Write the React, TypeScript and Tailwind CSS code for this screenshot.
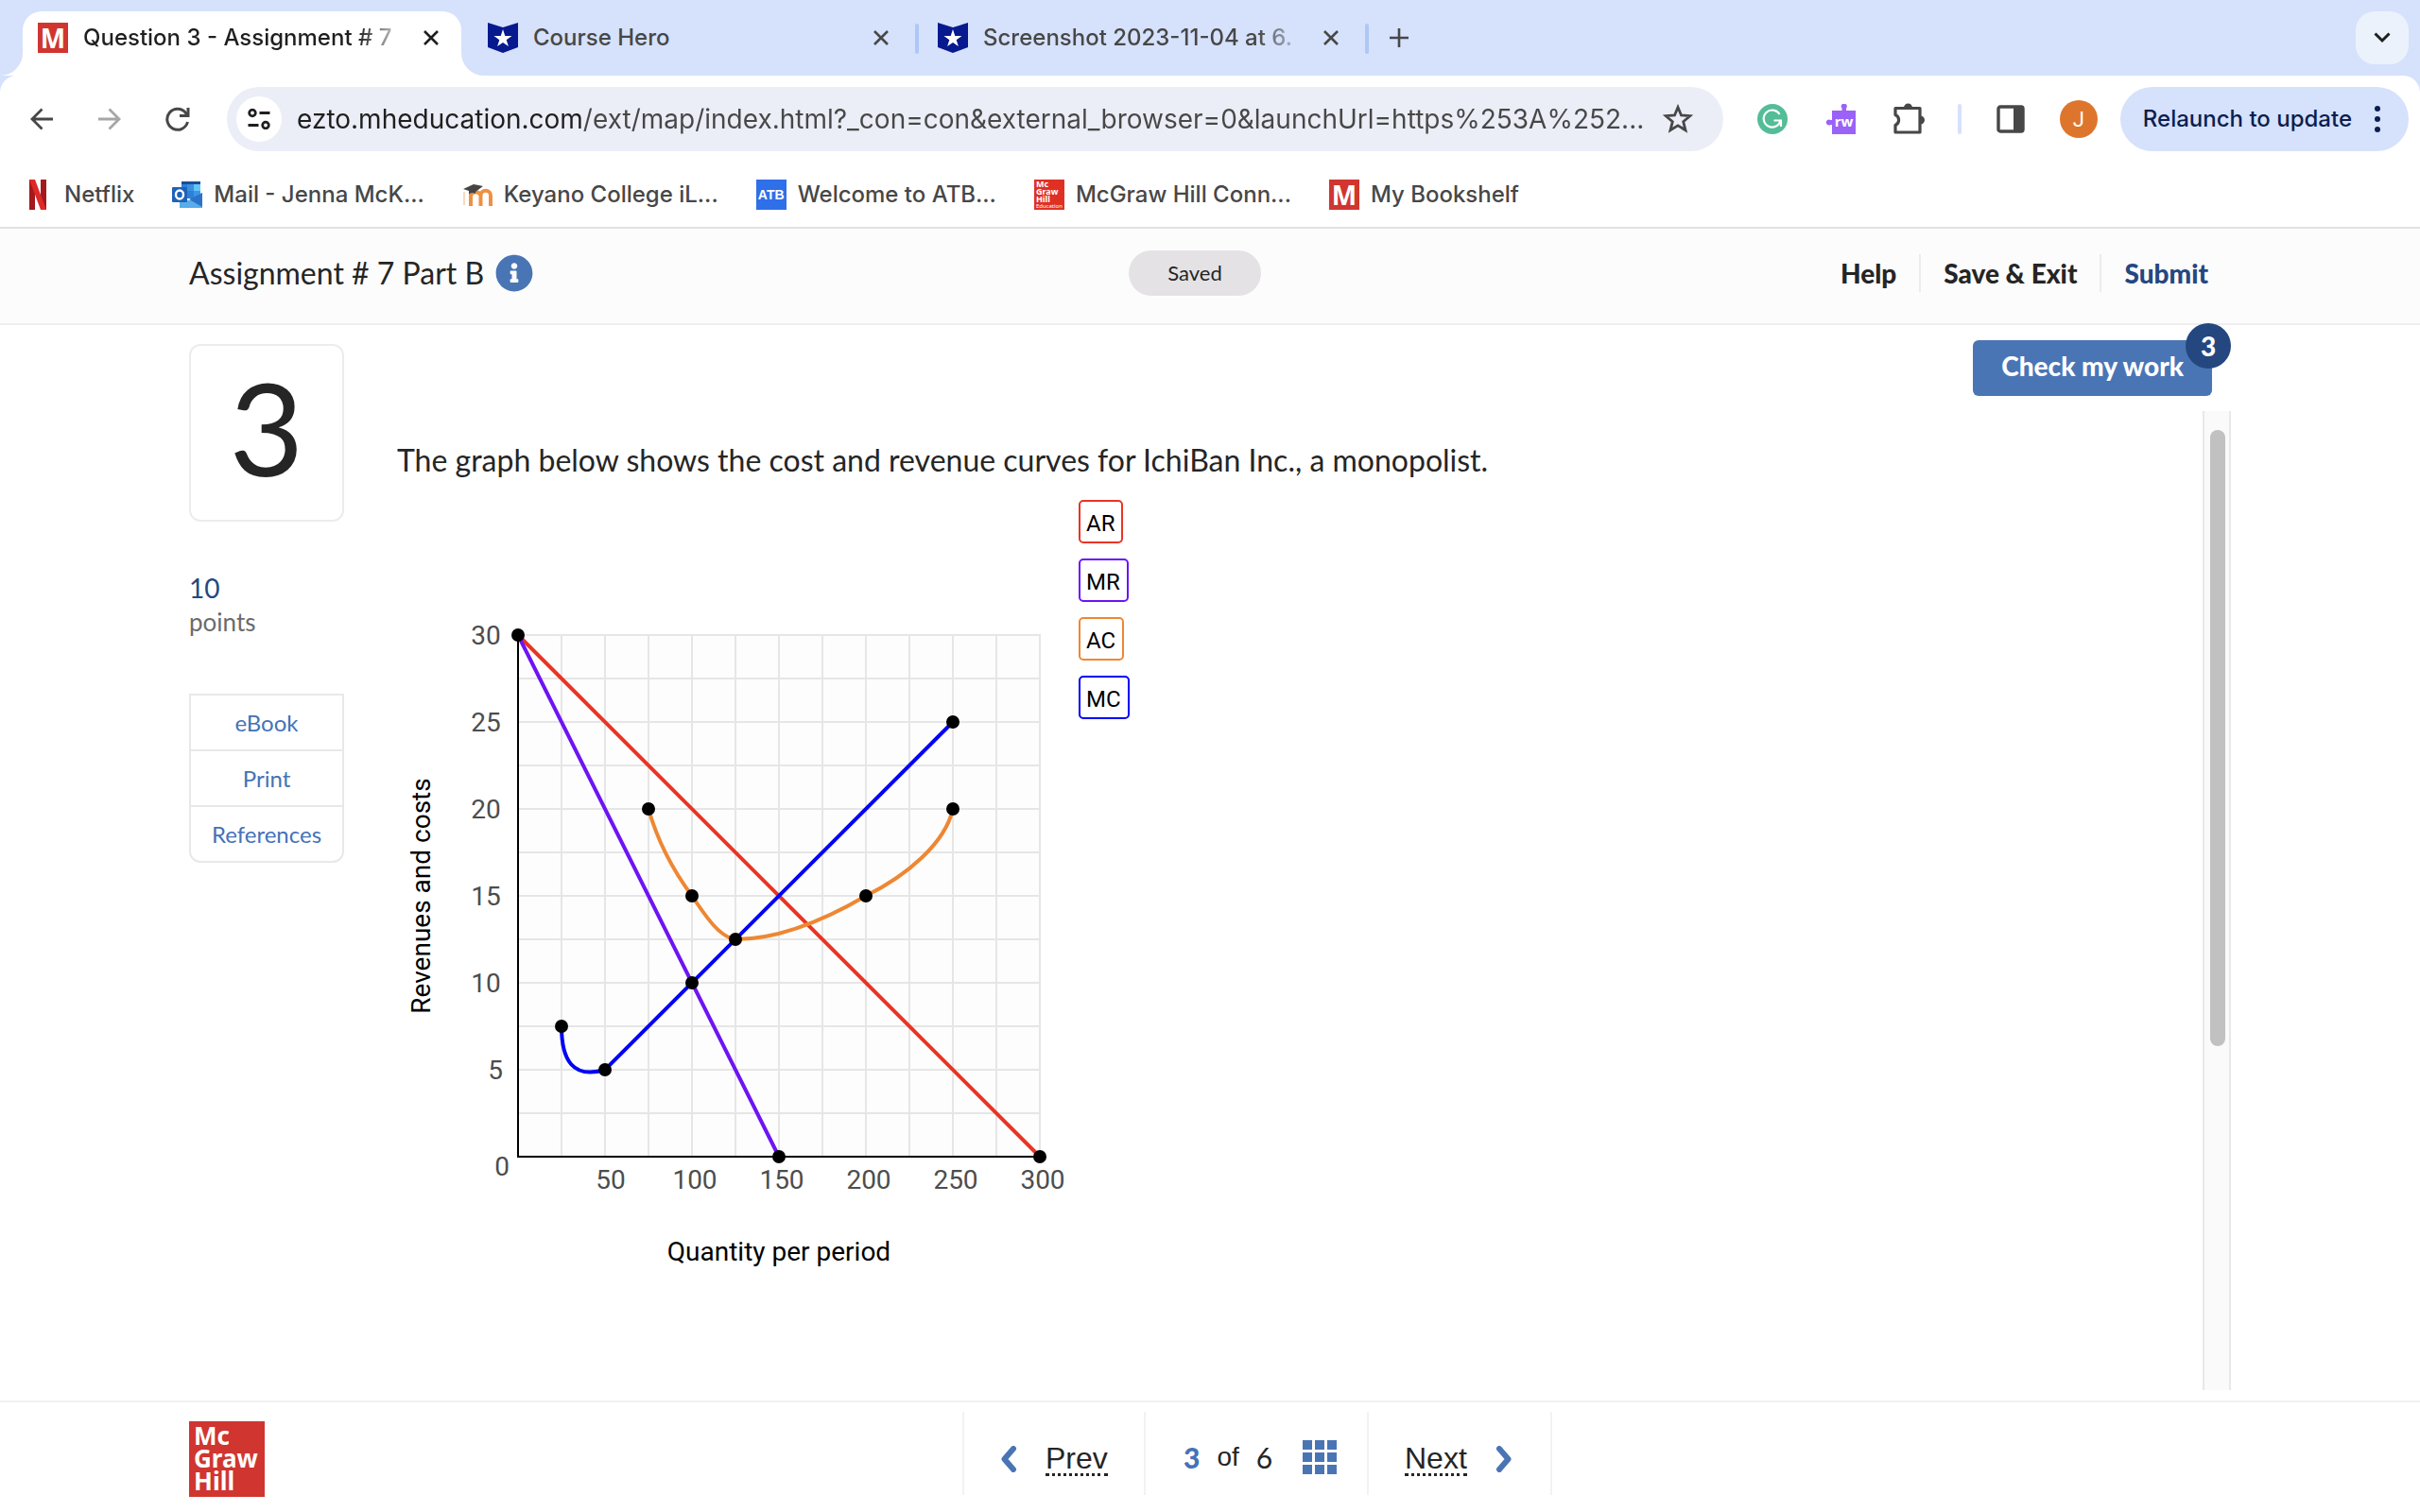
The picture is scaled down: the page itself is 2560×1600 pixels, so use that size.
import type { ReactNode } from 'react';
import { FaInfoCircle } from 'react-icons/fa';

function RedM() {
  return (
    <span className="flex size-8 shrink-0 items-center justify-center bg-[#d03530] font-['Open_Sans'] text-[28px] leading-8 font-bold text-white">
      M
    </span>
  );
}

function HeroIcon() {
  return (
    <svg viewBox="0 0 32 32" className="size-8 shrink-0">
      <path d="M0 0 L16 5 L32 0 V26 L16 32 L0 26 Z" fill="#06198f" />
      <path
        d="M16 7 L18.3 14 H25.5 L19.7 18.2 L21.9 25 L16 20.9 L10.1 25 L12.3 18.2 L6.5 14 H13.7 Z"
        fill="#fff"
      />
    </svg>
  );
}

function CloseIcon() {
  return (
    <svg viewBox="0 0 16 16" className="size-4" fill="none" stroke="currentColor" strokeWidth="2.6">
      <path d="M1 1 L15 15 M15 1 L1 15" />
    </svg>
  );
}

function Tab({ icon, title, active, fade }: { icon: ReactNode; title: string; active?: boolean; fade?: boolean }) {
  return (
    <div
      className={
        active
          ? 'relative mt-3 flex h-[68px] w-[464px] items-start rounded-t-[20px] bg-white px-4 text-[#1f1f1f]'
          : 'relative mt-3 flex h-[68px] w-[480px] items-start pr-6 pl-6 text-[#474747]'
      }
    >
      {active && (
        <>
          <svg viewBox="0 0 24 24" className="absolute bottom-0 -left-6 size-6">
            <path d="M24 0 V24 H0 A24 24 0 0 0 24 0 Z" fill="#fff" />
          </svg>
          <svg viewBox="0 0 24 24" className="absolute -right-6 bottom-0 size-6">
            <path d="M0 0 V24 H24 A24 24 0 0 1 0 0 Z" fill="#fff" />
          </svg>
        </>
      )}
      <div className="flex h-14 w-full items-center gap-4">
        {icon}
        <a
          href="#tab"
          className={
            fade
              ? 'flex-1 truncate [mask-image:linear-gradient(to_right,black_290px,transparent_345px)]'
              : 'flex-1 truncate'
          }
        >
          {title}
        </a>
        <button aria-label={`Close ${title}`} className="flex size-8 items-center justify-center">
          <CloseIcon />
        </button>
      </div>
      {!active && <span className="absolute top-[13px] right-0 h-8 w-1 rounded bg-[#adc8f5]" />}
    </div>
  );
}

function TabStrip() {
  return (
    <div className="flex h-20 bg-[#d6e1fc] pr-3 pl-6 text-[24px] leading-8 font-medium">
      <Tab icon={<RedM />} title="Question 3 - Assignment # 7" active fade />
      <div className="pl-1">
        <Tab icon={<HeroIcon />} title="Course Hero" />
      </div>
      <div className="-ml-1">
        <Tab icon={<HeroIcon />} title="Screenshot 2023-11-04 at 6." fade />
      </div>
      <button aria-label="New tab" className="mt-3 flex h-14 w-16 items-center justify-center text-[#474747]">
        <svg viewBox="0 0 20 20" className="size-5" fill="none" stroke="currentColor" strokeWidth="2.6">
          <path d="M10 0 V20 M0 10 H20" />
        </svg>
      </button>
      <button
        aria-label="Search tabs"
        className="mt-3 ml-auto flex size-14 items-center justify-center rounded-[20px] bg-[#ebf2fc] text-[#1f1f1f]"
      >
        <svg viewBox="0 0 18 12" className="h-3 w-[18px]" fill="none" stroke="currentColor" strokeWidth="3">
          <path d="M1.5 1.5 L9 9 L16.5 1.5" />
        </svg>
      </button>
    </div>
  );
}

function ToolButton({ label, children }: { label: string; children: ReactNode }) {
  return (
    <button aria-label={label} className="flex h-[68px] w-[72px] shrink-0 items-center justify-center text-[#474747]">
      {children}
    </button>
  );
}

function Toolbar() {
  return (
    <div className="bg-[#d6e1fc]">
      <div className="flex h-[92px] items-center rounded-t-[18px] bg-white pr-3 pl-2">
        <ToolButton label="Back">
          <svg viewBox="0 0 24 24" className="size-6" fill="none" stroke="currentColor" strokeWidth="2.8">
            <path d="M24 12 H2 M12.5 1.5 L2 12 L12.5 22.5" />
          </svg>
        </ToolButton>
        <ToolButton label="Forward">
          <svg viewBox="0 0 24 24" className="size-6" fill="none" stroke="#a6a6a6" strokeWidth="2.8">
            <path d="M0 12 H22 M11.5 1.5 L22 12 L11.5 22.5" />
          </svg>
        </ToolButton>
        <ToolButton label="Reload">
          <svg viewBox="0 0 26 26" className="size-[26px]" fill="none" stroke="currentColor" strokeWidth="3">
            <path d="M23.5 16 A11 11 0 1 1 21.5 6.5 L23.5 9" />
            <path d="M24 1 V9.5 H15" />
          </svg>
        </ToolButton>
        <div className="mr-4 ml-4 flex h-[68px] flex-1 items-center rounded-full bg-[#ebeef7] pr-6 pl-[10px]">
          <button
            aria-label="View site information"
            className="flex size-12 shrink-0 items-center justify-center rounded-full bg-white text-[#1f1f1f]"
          >
            <svg viewBox="0 0 24 22" className="h-[22px] w-6" fill="none" stroke="currentColor" strokeWidth="2.8">
              <circle cx="5" cy="4.5" r="3.3" />
              <path d="M12.5 4.5 H23.5 M0.5 17.5 H11.5" />
              <circle cx="19" cy="17.5" r="3.3" />
            </svg>
          </button>
          <input
            aria-label="Address"
            readOnly
            value="ezto.mheducation.com/ext/map/index.html?_con=con&external_browser=0&launchUrl=https%253A%252..."
            className="ml-4 h-12 flex-1 bg-[linear-gradient(to_right,#1f1f1f_301px,#474747_301px)] bg-clip-text text-[28px] leading-10 text-[#474747] outline-none [-webkit-text-fill-color:transparent]"
          />
          <button aria-label="Bookmark this page" className="flex size-12 items-center justify-center text-[#474747]">
            <svg viewBox="0 0 32 32" className="size-8" fill="none" stroke="currentColor" strokeWidth="2.8">
              <path d="M16 3.5 L19.5 12 L28.8 12.7 L21.7 18.7 L24 27.8 L16 22.9 L8 27.8 L10.3 18.7 L3.2 12.7 L12.5 12 Z" />
            </svg>
          </button>
        </div>
        <ToolButton label="Grammarly">
          <svg viewBox="0 0 32 32" className="size-8" fill="none">
            <circle cx="16" cy="16" r="16" fill="#54bd98" />
            <path d="M23.5 11 A9 9 0 1 0 24.5 17.5 M17.5 17.5 H25 V24" stroke="#fff" strokeWidth="2.2" />
          </svg>
        </ToolButton>
        <ToolButton label="Read and write">
          <svg viewBox="0 0 32 32" className="size-8">
            <path d="M7 7 H17.5 V4.5 A3 3 0 1 1 22 4.5 V7 H32 V32 H7 V22 H5.5 A3 3 0 1 1 5.5 17 H7 Z" fill="#9a62f7" />
            <text x="19.5" y="23.5" textAnchor="middle" className="fill-white font-['Open_Sans'] text-[15px] font-bold">
              rw
            </text>
          </svg>
        </ToolButton>
        <ToolButton label="Extensions">
          <svg viewBox="0 0 34 34" className="size-[34px]">
            <path
              d="M4 5.5 H29 V31 H3 V23.5 A6 6 0 0 0 3 12.5 V5.5 Z"
              fill="none"
              stroke="currentColor"
              strokeWidth="3.2"
              strokeLinejoin="round"
            />
            <path d="M12 5 A4.5 4.5 0 0 1 21 5 Z M29.5 13.5 A4.5 4.5 0 0 1 29.5 22.5 Z" fill="currentColor" />
          </svg>
        </ToolButton>
        <div className="flex w-9 shrink-0 justify-center">
          <span className="h-8 w-1 rounded bg-[#d6e1fc]" />
        </div>
        <ToolButton label="Side panel">
          <svg viewBox="0 0 30 30" className="size-[30px]">
            <rect x="2" y="2" width="26" height="26" rx="2" fill="none" stroke="currentColor" strokeWidth="3.4" />
            <rect x="18" y="2" width="11" height="26" fill="currentColor" />
          </svg>
        </ToolButton>
        <ToolButton label="Profile">
          <span className="flex size-10 items-center justify-center rounded-full bg-[#de752c] font-['Roboto'] text-[22px] text-white">
            J
          </span>
        </ToolButton>
        <button className="ml-2 flex h-[68px] shrink-0 items-center rounded-full bg-[#d6e1fc] pr-[30px] pl-6 text-[24px] leading-8 font-medium text-[#0b1e4f]">
          Relaunch to update
          <svg viewBox="0 0 6 28" className="ml-6 h-7 w-[6px]" fill="currentColor">
            <circle cx="3" cy="3" r="3" />
            <circle cx="3" cy="14" r="3" />
            <circle cx="3" cy="25" r="3" />
          </svg>
        </button>
      </div>
    </div>
  );
}

function NetflixIcon() {
  return (
    <svg viewBox="0 0 32 32" className="size-8">
      <path d="M7 0 H13 V32 L7 32 Z M19 0 H25 V32 H19 Z" fill="#a3191c" />
      <path d="M7 0 H13 L25 32 H19 Z" fill="#dd2a28" />
    </svg>
  );
}

function OutlookIcon() {
  return (
    <svg viewBox="0 0 32 32" className="size-8">
      <path d="M10 2 H30 V20 H10 Z" fill="#2f7fd6" />
      <path d="M10 2 H30 V5 H10 Z" fill="#1c4c98" />
      <path d="M16 5 H23 V12 H16 Z" fill="#3b8fdf" />
      <path d="M23 5 H30 V12 H23 Z" fill="#62c5f8" />
      <path d="M23 12 H30 V18 H23 Z" fill="#3a96e6" />
      <path d="M32 14 V30 H8 V22 L20 22 Z" fill="#57aeea" />
      <path d="M32 14 V29 L18 21 Z" fill="#2d72c8" />
      <rect x="0" y="8" width="16" height="16" rx="1" fill="#1f62b8" />
      <ellipse cx="8" cy="16" rx="4" ry="4.5" fill="none" stroke="#fff" strokeWidth="2.4" />
    </svg>
  );
}

function MoodleIcon() {
  return (
    <svg viewBox="0 0 32 32" className="size-8">
      <path
        d="M9 28 V17 A5.5 5.5 0 0 1 19.5 17 V28 M19.5 28 V17 A5 5 0 0 1 30 17 V28"
        fill="none"
        stroke="#ee9142"
        strokeWidth="4"
      />
      <path d="M2 13 V27" stroke="#f6d9c4" strokeWidth="2" />
      <path d="M1 10 L12 5 L22 7 L14 13 V15 C11 13 8 14 7 16 V12 Z" fill="#454545" />
    </svg>
  );
}

function BookmarksBar() {
  const items: { label: string; icon: ReactNode }[] = [
    { label: 'Netflix', icon: <NetflixIcon /> },
    { label: 'Mail - Jenna McK...', icon: <OutlookIcon /> },
    { label: 'Keyano College iL...', icon: <MoodleIcon /> },
    {
      label: 'Welcome to ATB...',
      icon: (
        <span className="flex size-8 items-center justify-center bg-[#2f6fe8] font-['Liberation_Sans'] text-[14px] font-bold text-white">
          ATB
        </span>
      ),
    },
    {
      label: 'McGraw Hill Conn...',
      icon: (
        <span className="flex size-8 flex-col justify-center bg-[#e03024] pl-[2px] font-['Noto_Sans'] text-[9px] leading-[8px] font-bold text-white">
          <span>Mc</span>
          <span>Graw</span>
          <span>Hill</span>
          <span className="text-[6px] leading-[6px] font-normal">Education</span>
        </span>
      ),
    },
    { label: 'My Bookshelf', icon: <RedM /> },
  ];
  return (
    <nav className="flex h-[68px] items-center gap-10 px-6 text-[24px] leading-8 font-medium text-[#474747]">
      {items.map((item) => (
        <a key={item.label} href="#bookmark" className="flex items-center gap-3 whitespace-nowrap">
          {item.icon}
          {item.label}
        </a>
      ))}
    </nav>
  );
}

function AssignmentHeader() {
  return (
    <header className="grid h-[104px] grid-cols-[1fr_auto_1fr] items-center border-y-2 border-t-[#e2e2e2] border-b-[#efefef] bg-[#fcfcfc] pr-[224px] pb-[6px] pl-[200px] text-[#252525]">
      <div className="flex items-center gap-3">
        <h1 className="text-[32px] leading-10">Assignment # 7 Part B</h1>
        <button aria-label="Assignment information" className="text-[#4a75b5]">
          <FaInfoCircle className="size-10" />
        </button>
      </div>
      <span className="mr-2 flex h-12 w-[140px] items-center justify-center rounded-full bg-[#e4e2e5] text-[22px] leading-8">
        Saved
      </span>
      <div className="flex items-center justify-end text-[28px] leading-10 font-black">
        <a href="#help" className="pr-6">
          Help
        </a>
        <a href="#exit" className="border-x-2 border-[#ececec] px-6">
          Save &amp; Exit
        </a>
        <a href="#submit" className="pl-6 text-[#25477f]">
          Submit
        </a>
      </div>
    </header>
  );
}

function Sidebar() {
  return (
    <aside className="w-[164px] shrink-0 pt-5">
      <div className="flex h-[188px] items-center justify-center rounded-xl border-2 border-[#ececec] pb-3 text-[136px] leading-none text-[#252525]">
        3
      </div>
      <div className="mt-[52px] text-[28px] leading-9 text-[#25477f]">10</div>
      <div className="text-[26px] leading-9 text-[#6b6b6b]">points</div>
      <div className="mt-[58px] flex flex-col divide-y-2 divide-[#e8e8e8] rounded-b-xl border-2 border-[#e8e8e8] text-center text-[24px] leading-[57px] text-[#4472b8]">
        <a href="#ebook">eBook</a>
        <a href="#print">Print</a>
        <a href="#references">References</a>
      </div>
    </aside>
  );
}

const gridSteps = Array.from({ length: 12 }, (_, i) => i + 1);
const dots: [number, number][] = [
  [0, 30],
  [75, 20],
  [100, 15],
  [125, 12.5],
  [200, 15],
  [250, 20],
  [250, 25],
  [100, 10],
  [25, 7.5],
  [50, 5],
  [150, 0],
  [300, 0],
];

function CostChart() {
  return (
    <svg
      viewBox="420 507 720 853"
      className="h-[853px] w-[720px] shrink-0 font-['Roboto'] text-[28px]"
      role="img"
      aria-label="Cost and revenue curves"
    >
      <rect x="548" y="672" width="552" height="552" fill="#fdfdfd" />
      <g stroke="#e6e6e6" strokeWidth="2">
        {gridSteps.map((i) => (
          <line key={`v${i}`} x1={548 + i * 46} x2={548 + i * 46} y1="671" y2="1224" />
        ))}
        {gridSteps.map((i) => (
          <line key={`h${i}`} x1="548" x2="1101" y1={1224 - i * 46} y2={1224 - i * 46} />
        ))}
      </g>
      <path d="M548 672 V1224 H1100" fill="none" stroke="#000" strokeWidth="2" />
      <g fill="none" strokeWidth="4">
        <path d="M548 672 L1100 1224" stroke="#ea3423" />
        <path d="M548 672 L824 1224" stroke="#6d14f4" />
        <path
          d="M686 856 C697 895 715 925 732 948 C748 972 762 992 778 994 C825 994 875 972 916 948 C960 926 1000 892 1008 856"
          stroke="#ee8733"
        />
        <path d="M594 1086 C594 1122 606 1142 640 1132 L1008 764" stroke="#0000f5" />
      </g>
      {dots.map(([x, y]) => (
        <circle key={`${x}-${y}`} cx={548 + x * 1.84} cy={1224 - y * 18.4} r="7" />
      ))}
      <g fill="#4d4d4d" textAnchor="middle">
        {[30, 25, 20, 15, 10].map((v) => (
          <text key={v} x="514" y={1234 - v * 18.4}>
            {v}
          </text>
        ))}
        <text x="524" y="1142">
          5
        </text>
        <text x="531" y="1244">
          0
        </text>
        {[50, 100, 150, 200, 250, 300].map((v) => (
          <text key={v} x={(v < 100 ? 554 : 551) + v * 1.84} y="1258">
            {v}
          </text>
        ))}
      </g>
      <g textAnchor="middle">
        <text x="824" y="1334">
          Quantity per period
        </text>
        <text transform="translate(455 948) rotate(-90)">Revenues and costs</text>
      </g>
    </svg>
  );
}

function Legend() {
  const box = "h-[46px] rounded-[5px] border-2 pr-[7px] pl-[6px] pt-1 font-['Roboto'] text-[24px] leading-9 text-black";
  return (
    <div className="flex flex-col items-start gap-4 pt-[22px] pl-px">
      <button className={`${box} border-[#ea3423]`}>AR</button>
      <button className={`${box} border-[#6d14f4]`}>MR</button>
      <button className={`${box} border-[#ee8733]`}>AC</button>
      <button className={`${box} border-[#0000f5]`}>MC</button>
    </div>
  );
}

function Question() {
  return (
    <section className="flex flex-1 flex-col pb-[11px] pl-14">
      <div className="flex justify-end pt-4 pr-5">
        <button className="relative h-[59px] rounded-md bg-[#4a75b5] px-[30px] pb-1 text-[28px] leading-[55px] font-black text-white">
          Check my work
          <span className="absolute -top-[18px] -right-5 flex size-12 items-center justify-center rounded-full bg-[#25477f] text-[28px] leading-none">
            3
          </span>
        </button>
      </div>
      <div className="mt-4 flex flex-1">
        <div className="flex-1 pt-8">
          <p className="text-[32px] leading-10 text-[#252525]">
            The graph below shows the cost and revenue curves for IchiBan Inc., a monopolist.
          </p>
          <div className="flex">
            <CostChart />
            <Legend />
          </div>
        </div>
        <div className="w-[30px] border-x-2 border-[#e8e8e8] bg-[#fafafa] px-[6px] pt-5">
          <div className="h-[652px] w-4 rounded-full bg-[#c1c1c1]" />
        </div>
      </div>
    </section>
  );
}

function Footer() {
  return (
    <footer className="grid h-[118px] grid-cols-[1fr_auto_1fr] border-t-2 border-[#f2f2f2] px-[200px] pt-[10px] text-[#252525]">
      <div className="mt-[10px] size-20 bg-[#d03530] px-[5px] pt-[3px] font-['Noto_Sans'] text-[26px] leading-6 font-bold text-white">
        <div>Mc</div>
        <div>Graw</div>
        <div>Hill</div>
      </div>
      <nav className="pl-[100px]">
        <div className="flex h-[88px] divide-x-2 divide-[#f2f2f2] border-x-2 border-[#f2f2f2]">
          <button className="flex w-[192px] items-center gap-[30px] pt-3 pl-[38px] font-['Liberation_Sans'] text-[32px] leading-8">
            <svg viewBox="0 0 18 28" className="h-7 w-[18px]" fill="none" stroke="#4a75b5" strokeWidth="6">
              <path d="M14 3 L4.5 14 L14 25" strokeLinecap="round" strokeLinejoin="round" />
            </svg>
            <span className="border-b-[3px] border-dotted border-[#252525] leading-8">Prev</span>
          </button>
          <div className="flex w-[236px] items-center pt-2 pl-10 text-[30px] leading-8">
            <span className="font-black text-[#4472b8]">3</span>
            <span className="mx-[18px] font-['Liberation_Sans'] text-[28px]">of</span>
            <span>6</span>
            <button aria-label="Question list" className="ml-8">
              <svg viewBox="0 0 36 36" className="size-9" fill="#4a75b5">
                {[0, 13, 26].map((y) =>
                  [0, 13, 26].map((x) => <rect key={`${x}-${y}`} x={x} y={y} width="10" height="10" />),
                )}
              </svg>
            </button>
          </div>
          <button className="flex w-[192px] items-center gap-[30px] pt-3 pl-[38px] font-['Liberation_Sans'] text-[32px] leading-8">
            <span className="border-b-[3px] border-dotted border-[#252525] leading-8">Next</span>
            <svg viewBox="0 0 18 28" className="h-7 w-[18px]" fill="none" stroke="#4a75b5" strokeWidth="6">
              <path d="M4 3 L13.5 14 L4 25" strokeLinecap="round" strokeLinejoin="round" />
            </svg>
          </button>
        </div>
      </nav>
    </footer>
  );
}

export default function App() {
  return (
    <div className="flex min-h-screen flex-col bg-white font-['Lato',sans-serif]">
      <div className="font-['Inter',sans-serif]">
        <TabStrip />
        <Toolbar />
        <BookmarksBar />
      </div>
      <AssignmentHeader />
      <main className="flex flex-1 px-[200px]">
        <Sidebar />
        <Question />
      </main>
      <Footer />
    </div>
  );
}
